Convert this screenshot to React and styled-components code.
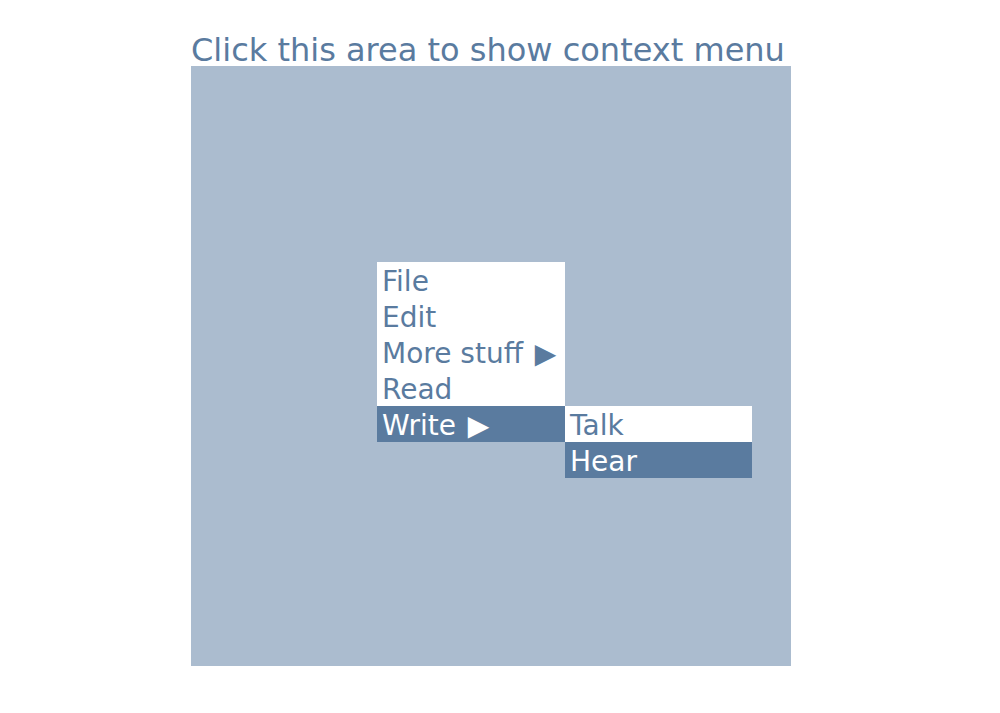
import React from "react";
import styled, { createGlobalStyle } from "styled-components";

const GlobalStyle = createGlobalStyle`
  html, body {
    margin: 0;
    padding: 0;
    background: #ffffff;
    font-family: "DejaVu Sans", Verdana, sans-serif;
  }
`;

const Page = styled.div`
  padding: 29px 0 0 191px;
`;

const Title = styled.div`
  padding-top: 5px;
  font-size: 32px;
  color: #5a7b9f;
  line-height: 32px;
`;

const Area = styled.div`
  position: relative;
  width: 600px;
  height: 600px;
  background: #abbccf;
`;

const Menu = styled.ul`
  position: absolute;
  left: ${({ x }) => x}px;
  top: ${({ y }) => y}px;
  width: ${({ w }) => w}px;
  margin: 0;
  padding: 0;
  list-style: none;
  background: #ffffff;
`;

const Item = styled.li`
  position: relative;
  box-sizing: border-box;
  height: 36px;
  line-height: 32px;
  padding: 4px 5px 0;
  font-size: 28px;
  white-space: nowrap;
  color: ${({ active }) => (active ? "#ffffff" : "#5a7b9f")};
  background: ${({ active }) => (active ? "#5a7b9f" : "transparent")};
`;

const Arrow = styled.span`
  margin-left: 3px;
`;

const SubMenu = styled(Menu)`
  left: 100%;
  top: 0;
`;

const App = () => (
  <>
    <GlobalStyle />
    <Page>
      <Title>Click this area to show context menu</Title>
      <Area>
        <Menu x={186} y={196} w={188}>
          <Item>File</Item>
          <Item>Edit</Item>
          <Item>
            More stuff <Arrow>▶</Arrow>
          </Item>
          <Item>Read</Item>
          <Item active>
            Write <Arrow>▶</Arrow>
            <SubMenu w={187}>
              <Item>Talk</Item>
              <Item active>Hear</Item>
            </SubMenu>
          </Item>
        </Menu>
      </Area>
    </Page>
  </>
);

export default App;
